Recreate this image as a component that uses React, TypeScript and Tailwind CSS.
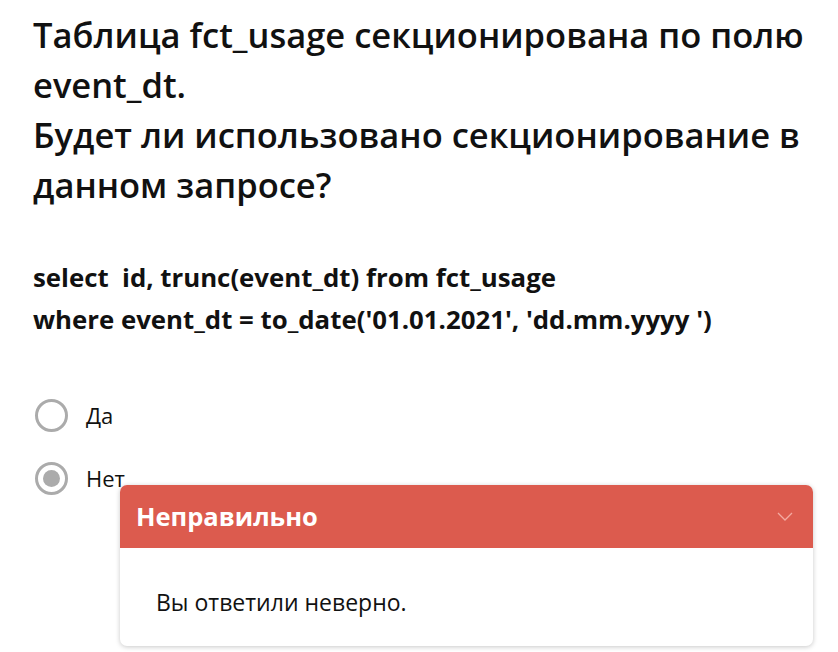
import { useState } from 'react'

const font = { fontFamily: '"Open Sans", "Noto Sans", sans-serif' }

function Radio({ checked, label }: { checked: boolean; label: string }) {
  return (
    <label className="flex items-center gap-[18px]">
      <span className="flex h-[33px] w-[33px] shrink-0 items-center justify-center rounded-full border-[3px] border-[#ababab]">
        {checked && <span className="h-[17px] w-[17px] rounded-full bg-[#ababab]" />}
      </span>
      <span className="text-[22px] text-[#111]">{label}</span>
    </label>
  )
}

export default function App() {
  const [open] = useState(true)

  return (
    <div className="relative h-[652px] w-[838px] overflow-hidden bg-white" style={font}>
      <div className="pl-[33px] pr-[10px] pt-[10px]">
        <h1 className="text-[34.5px] font-semibold leading-[50px] text-[#111]">
          Таблица fct_usage секционирована по полю event_dt.
          <br />
          Будет ли использовано секционирование в данном запросе?
        </h1>
        <p className="mt-[46px] whitespace-pre text-[25.8px] font-bold leading-[42px] text-[#111]">
          {'select  id, trunc(event_dt) from fct_usage\nwhere event_dt = to_date(\'01.01.2021\', \'dd.mm.yyyy \')'}
        </p>
        <div className="ml-[2px] mt-[59px] flex flex-col gap-[30px]">
          <Radio checked={false} label="Да" />
          <Radio checked label="Нет" />
        </div>
      </div>

      {open && (
        <div className="absolute left-[120px] top-[485px] w-[693px] overflow-hidden rounded-[7px] bg-white shadow-[0_1px_5px_rgba(0,0,0,0.22)]">
          <div className="flex h-[63px] items-center justify-between bg-[#dc5b4e] pl-[16px] pr-[20px]">
            <span className="text-[25.5px] font-bold text-white">Неправильно</span>
            <svg width="16" height="9" viewBox="0 0 16 9" fill="none">
              <path d="M1 1l7 7 7-7" stroke="#f4aaa1" strokeWidth="1.3" />
            </svg>
          </div>
          <div className="px-[36px] pb-[28px] pt-[38px] text-[23px] leading-[32px] text-[#111]">
            Вы ответили неверно.
          </div>
        </div>
      )}
    </div>
  )
}
